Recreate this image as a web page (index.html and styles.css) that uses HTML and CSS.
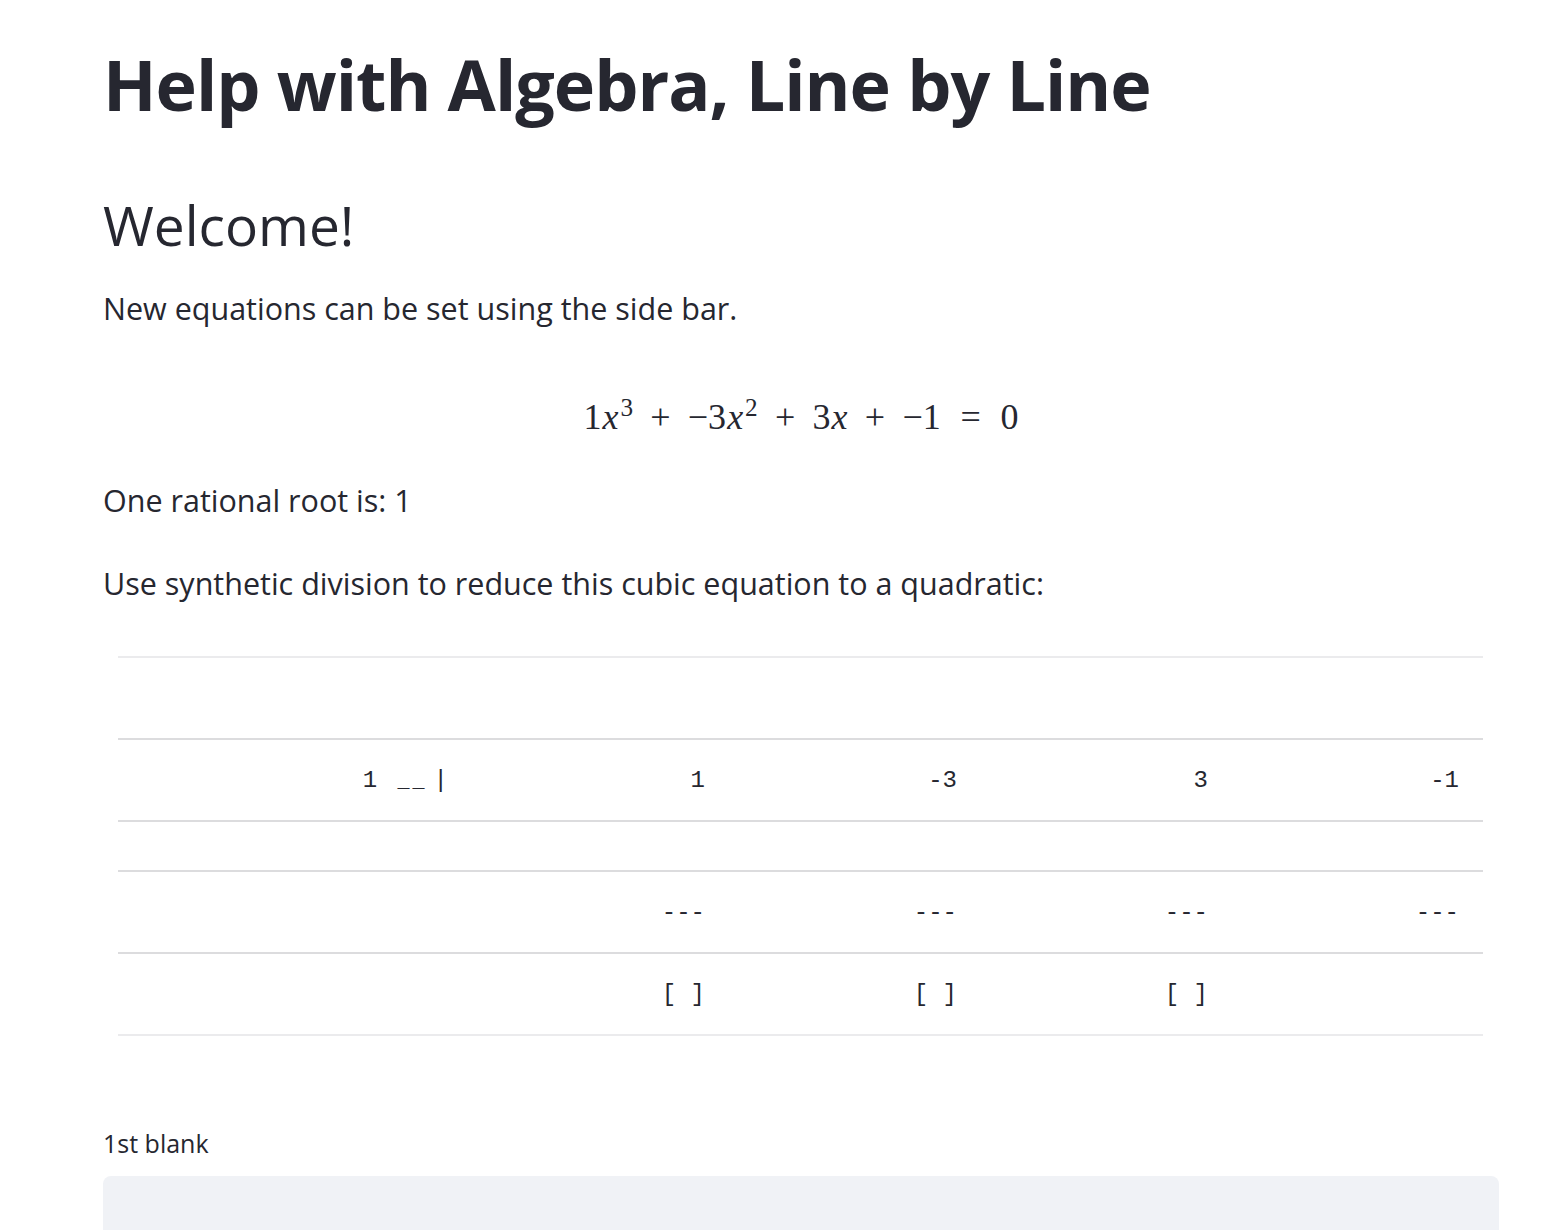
FILE: index.html
```html
<!DOCTYPE html>
<html lang="en">
<head>
<meta charset="utf-8">
<title>Help with Algebra, Line by Line</title>
<link rel="stylesheet" href="styles.css">
</head>
<body>
<main class="page">
  <h1 class="title">Help with Algebra, Line by Line</h1>
  <h2 class="welcome">Welcome!</h2>
  <p class="text first-text">New equations can be set using the side bar.</p>
  <div class="math">
    <span class="num">1</span><span class="var">x</span><sup class="sup">3</sup><span class="bin">+</span><span class="num">−3</span><span class="var">x</span><sup class="sup">2</sup><span class="bin">+</span><span class="num">3</span><span class="var">x</span><span class="bin">+</span><span class="num">−1</span><span class="rel">=</span><span class="num">0</span>
  </div>
  <p class="text root-text">One rational root is: 1</p>
  <p class="text use-text">Use synthetic division to reduce this cubic equation to a quadratic:</p>
  <table class="synth">
    <colgroup>
      <col class="c0"><col class="c1"><col class="c2"><col class="c3"><col class="c4">
    </colgroup>
    <thead>
      <tr class="row-head"><th></th><th></th><th></th><th></th><th></th></tr>
    </thead>
    <tbody>
      <tr class="row-tall"><td><span class="divisor">1</span> <span class="unders">__</span>|</td><td>1</td><td>-3</td><td>3</td><td>-1</td></tr>
      <tr class="row-short"><td></td><td></td><td></td><td></td><td></td></tr>
      <tr class="row-tall"><td></td><td>---</td><td>---</td><td>---</td><td>---</td></tr>
      <tr class="row-tall row-last"><td></td><td>[ ]</td><td>[ ]</td><td>[ ]</td><td></td></tr>
    </tbody>
  </table>
  <label class="label" for="blank1">1st blank</label>
  <div class="input" id="blank1"></div>
</main>
</body>
</html>
```
FILE: styles.css
```css
html, body {
  margin: 0;
  padding: 0;
  background: #ffffff;
}
body {
  color: #262730;
  font-family: "Open Sans", "Noto Sans", sans-serif;
  overflow: hidden;
}
.page {
  width: 1396px;
  padding: 42px 0 0 103px;
  display: flex;
  flex-direction: column;
}
.title {
  margin: 0;
  font-size: 70px;
  line-height: 84px;
  font-weight: 700;
  letter-spacing: -1px;
  white-space: nowrap;
}
.welcome {
  margin: 65px 0 0 0;
  font-size: 55px;
  line-height: 68px;
  font-weight: 400;
}
.text {
  margin: 0;
  font-size: 30.5px;
  line-height: 44px;
  white-space: nowrap;
}
.first-text { margin-top: 27px; }
.math {
  margin-top: 57px;
  height: 60px;
  line-height: 60px;
  text-align: center;
  font-family: "Liberation Serif", "DejaVu Serif", serif;
  font-size: 36px;
  white-space: nowrap;
}
.math .var { font-style: italic; margin-left: 1px; }
.math .sup {
  font-size: 0.7em;
  vertical-align: 0.5em;
  line-height: 0;
  margin-left: 2px;
}
.math .bin { margin: 0 0.48em; }
.math .rel { margin: 0 0.55em; }
.root-text { margin-top: 31px; }
.use-text { margin-top: 39px; }
.synth {
  margin: 51px 0 0 15px;
  width: 1365px;
  border-collapse: collapse;
  table-layout: fixed;
  font-family: "Liberation Mono", "DejaVu Sans Mono", monospace;
  font-size: 24px;
  color: #262730;
}
.c0 { width: 354px; }
.c1 { width: 257px; }
.c2 { width: 252px; }
.c3 { width: 251px; }
.c4 { width: 251px; }
.synth tr { border-top: 2px solid #dcdcde; }
.synth .row-head { border-top-color: #ebebed; height: 82px; }
.synth .row-tall { height: 82px; }
.synth .row-short { height: 50px; }
.synth .row-last { border-bottom: 2px solid #ebebed; }
.synth th, .synth td {
  padding: 0 24px 0 0;
  text-align: right;
  vertical-align: middle;
  white-space: pre;
  font-weight: 400;
}
.synth .divisor { margin-right: 6px; }
.synth .unders { font-size: 20px; letter-spacing: 3px; margin-right: 6px; }
.label {
  margin-top: 92px;
  font-size: 25px;
  line-height: 30px;
}
.input {
  margin-top: 18px;
  height: 90px;
  background: #f0f2f6;
  border-radius: 8px;
}
```
